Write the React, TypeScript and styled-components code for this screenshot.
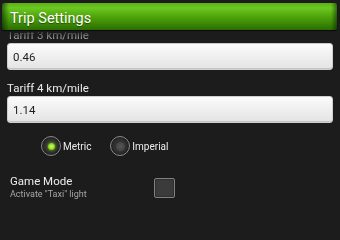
import React, { useLayoutEffect, useRef, useState } from "react";
import styled, { createGlobalStyle } from "styled-components";

const GlobalStyle = createGlobalStyle`
  html, body {
    margin: 0;
    padding: 0;
    background: #1c1c1c;
    font-family: "Roboto", "DejaVu Sans", sans-serif;
  }
  * {
    box-sizing: border-box;
  }
`;

const Screen = styled.div`
  display: flex;
  flex-direction: column;
  width: 340px;
  height: 204px;
  overflow: hidden;
  background: #1c1c1c;
`;

const TitleBar = styled.div`
  flex: none;
  display: flex;
  align-items: center;
  height: 27px;
  margin: 3px 3px 2px 2px;
  padding: 3px 0 0 8px;
  border-radius: 2px;
  background:
    linear-gradient(90deg, rgba(0, 20, 0, 0.55) 0, rgba(0, 0, 0, 0) 7px, rgba(0, 0, 0, 0) calc(100% - 6px), rgba(0, 20, 0, 0.5) 100%),
    linear-gradient(180deg, #58b012 0%, #6cc822 18%, #58b010 40%, #3f9006 70%, #2c6c02 100%);
  box-shadow: 0 1px 1px rgba(0, 0, 0, 0.7);
  color: #ffffff;
  font-size: 14.5px;
  text-shadow: 0 1px 1px rgba(0, 0, 0, 0.45);
`;

// scroll view with Android-like fading edge at the top
const Scroller = styled.div`
  flex: 1;
  min-height: 0;
  overflow: hidden;
  mask-image: linear-gradient(180deg, rgba(0, 0, 0, 0.2) 0, #000 12px);
  -webkit-mask-image: linear-gradient(180deg, rgba(0, 0, 0, 0.2) 0, #000 12px);
`;

const Form = styled.div`
  display: flex;
  flex-direction: column;
  padding: 0 7px 40px;
`;

const Label = styled.div`
  height: 26px;
  padding-top: 11px;
  color: #ececec;
  font-size: 11.5px;
  line-height: 14px;
`;

const Field = styled.input`
  flex: none;
  height: 27px;
  width: 100%;
  margin: 0;
  padding: 0 5px;
  border: 1px solid #cfcfcf;
  border-radius: 3px;
  background: linear-gradient(180deg, #fbfbfb 0%, #f0f0f0 45%, #e4e4e4 100%);
  box-shadow: inset 0 -1px 0 #c4c4c4;
  color: #1e1e1e;
  font-family: inherit;
  font-size: 11.5px;
  outline: none;
`;

const RadioGroup = styled.div`
  display: flex;
  align-items: flex-start;
  gap: 19px;
  height: 50px;
  padding: 13px 0 0 34px;
`;

const RadioItem = styled.label`
  display: flex;
  align-items: center;
  gap: 2px;
  height: 20px;
  color: #ececec;
  font-size: 10px;
  padding-top: 1px;
`;

const RadioCircle = styled.span<{ $checked: boolean }>`
  display: flex;
  align-items: center;
  justify-content: center;
  width: 20px;
  height: 20px;
  margin-top: -1px;
  border-radius: 50%;
  border: 1.5px solid #8c8c8c;
  background: radial-gradient(circle, #383838 0%, #262626 100%);
  box-shadow: 0 0 1px rgba(0, 0, 0, 0.9), inset 0 0 2px rgba(0, 0, 0, 0.8);

  &::after {
    content: "";
    width: ${(p) => (p.$checked ? 7 : 9)}px;
    height: ${(p) => (p.$checked ? 7 : 9)}px;
    border-radius: 50%;
    background: ${(p) =>
      p.$checked
        ? "radial-gradient(circle, #d4ff70 0%, #8edc1e 55%, #5eaa0a 100%)"
        : "radial-gradient(circle, #555555 0%, #3e3e3e 100%)"};
    box-shadow: ${(p) => (p.$checked ? "0 0 3px #7ed321" : "none")};
  }
`;

const OptionRow = styled.div`
  display: grid;
  grid-template-columns: 144px auto;
  align-items: center;
  padding-left: 3px;
`;

const OptionText = styled.div`
  display: flex;
  flex-direction: column;
`;

const OptionTitle = styled.div`
  color: #ececec;
  font-size: 11.5px;
  line-height: 16px;
`;

const OptionHint = styled.div`
  color: #a6a6a6;
  font-size: 9px;
  line-height: 11px;
`;

const CheckBox = styled.span<{ $checked: boolean }>`
  width: 21px;
  height: 20px;
  margin-top: 3px;
  border: 1.5px solid #808080;
  border-radius: 2px;
  background: ${(p) => (p.$checked ? "#5aa40a" : "#3b3b3b")};
  box-shadow: inset 0 0 2px rgba(0, 0, 0, 0.6);
`;

export default function App() {
  const scrollRef = useRef<HTMLDivElement>(null);
  const [units, setUnits] = useState<"metric" | "imperial">("metric");
  const [gameMode, setGameMode] = useState(false);

  useLayoutEffect(() => {
    if (scrollRef.current) scrollRef.current.scrollTop = 15;
  }, []);

  return (
    <>
      <GlobalStyle />
      <Screen>
        <TitleBar>Trip Settings</TitleBar>
        <Scroller ref={scrollRef}>
          <Form>
            <Label>Tariff 3 km/mile</Label>
            <Field defaultValue="0.46" />
            <Label>Tariff 4 km/mile</Label>
            <Field defaultValue="1.14" />
            <RadioGroup>
              <RadioItem onClick={() => setUnits("metric")}>
                <RadioCircle $checked={units === "metric"} />
                Metric
              </RadioItem>
              <RadioItem onClick={() => setUnits("imperial")}>
                <RadioCircle $checked={units === "imperial"} />
                Imperial
              </RadioItem>
            </RadioGroup>
            <OptionRow onClick={() => setGameMode(!gameMode)}>
              <OptionText>
                <OptionTitle>Game Mode</OptionTitle>
                <OptionHint>Activate "Taxi" light</OptionHint>
              </OptionText>
              <CheckBox $checked={gameMode} />
            </OptionRow>
          </Form>
        </Scroller>
      </Screen>
    </>
  );
}
